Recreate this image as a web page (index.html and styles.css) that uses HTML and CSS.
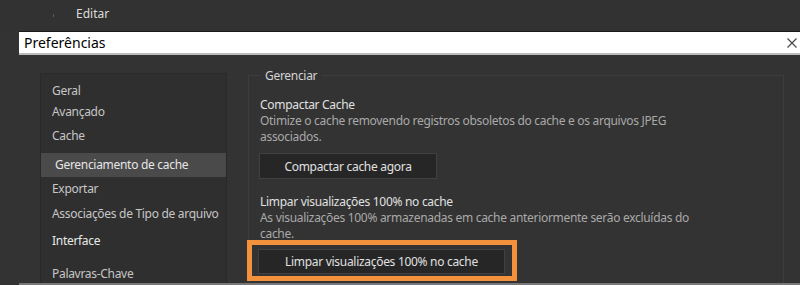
FILE: index.html
```html
<!DOCTYPE html>
<html lang="pt">
<head>
<meta charset="utf-8">
<link rel="stylesheet" href="styles.css">
</head>
<body>
<div class="topbar">
  <span class="dot"></span>
  <span class="menu-item">Editar</span>
</div>
<div class="window">
  <div class="titlebar">
    <span class="title">Preferências</span>
    <svg class="close" width="10" height="10" viewBox="0 0 10 10"><path d="M0.5 0.5 L9.5 9.5 M9.5 0.5 L0.5 9.5" stroke="#4a4a4a" stroke-width="1.2" fill="none"/></svg>
  </div>
  <div class="body">
    <div class="sidebar">
      <div class="item">Geral</div>
      <div class="item g1">Avançado</div>
      <div class="item g4">Cache</div>
      <div class="item selected">Gerenciamento de cache</div>
      <div class="item g2">Exportar</div>
      <div class="item g5">Associações de Tipo de arquivo</div>
      <div class="item g7 bright">Interface</div>
      <div class="item g13">Palavras-Chave</div>
    </div>
    <fieldset class="group">
      <legend class="legend">Gerenciar</legend>
      <div class="section">
        <div class="sec-title">Compactar Cache</div>
        <div class="sec-desc">Otimize o cache removendo registros obsoletos do cache e os arquivos JPEG associados.</div>
        <button class="btn btn-compact">Compactar cache agora</button>
      </div>
      <div class="section s2">
        <div class="sec-title">Limpar visualizações 100% no cache</div>
        <div class="sec-desc">As visualizações 100% armazenadas em cache anteriormente serão excluídas do cache.</div>
        <div class="highlight">
          <button class="btn btn-clear">Limpar visualizações 100% no cache</button>
          <span class="hl-box"></span>
        </div>
      </div>
    </fieldset>
  </div>
</div>
</body>
</html>
```
FILE: styles.css
```css
html, body {
  margin: 0;
  padding: 0;
}
body {
  width: 800px;
  height: 285px;
  overflow: hidden;
  background: #333333;
  font-family: "Noto Sans", "Open Sans", sans-serif;
  font-size: 12px;
  letter-spacing: -0.3px;
  color: #d0d0d0;
}
.topbar {
  height: 31px;
  display: flex;
  align-items: center;
  background: #323232;
}
.dot {
  width: 1px;
  height: 3px;
  background: #5a5a5a;
  margin-left: 53px;
  margin-right: 22px;
}
.menu-item {
  color: #dcdcdc;
  font-size: 12px;
  letter-spacing: 0;
  position: relative;
  top: -2px;
}
.window {
  margin-left: 19px;
}
.titlebar {
  height: 21px;
  background: #ffffff;
  border-top: 1px solid #1a1a1a;
  border-bottom: 2px solid #bcbcbc;
  display: flex;
  align-items: center;
  justify-content: space-between;
  padding: 0 3px 0 5px;
}
.title {
  color: #000;
  font-size: 14px;
  letter-spacing: 0;
}
.close {
  margin-top: 1px;
}
.body {
  height: 210px;
  border-bottom: 2px solid #777777;
  display: flex;
  align-items: flex-start;
  padding-top: 18px;
  padding-left: 21px;
  overflow: hidden;
}
.sidebar {
  width: 187px;
  height: 240px;
  background: #2f2f2f;
  border: 1px solid #292929;
  padding-top: 7px;
  box-sizing: border-box;
  flex: none;
}
.item {
  height: 20px;
  line-height: 20px;
  padding-left: 11px;
  color: #c6c6c6;
  white-space: nowrap;
}
.g1 { margin-top: 1px; }
.g2 { margin-top: 2px; }
.g4 { margin-top: 4px; }
.g5 { margin-top: 5px; }
.g7 { margin-top: 7px; }
.g13 { margin-top: 13px; }
.selected {
  margin-top: 7px;
  height: 24px;
  line-height: 24px;
  background: #4a4a4a;
  color: #e6e6e6;
  padding-left: 14px;
}
.bright {
  color: #e8e8e8;
}
.group {
  margin: -5px 0 0 21px;
  width: 536px;
  height: 250px;
  box-sizing: border-box;
  border: 1px solid #3d3d3d;
  padding: 14px 0 0 11px;
  flex: none;
}
.legend {
  color: #d4d4d4;
  padding: 0 5px;
  margin-left: 0;
  line-height: 14px;
  position: relative;
  top: 1px;
}
.section {
  display: flex;
  flex-direction: column;
  align-items: flex-start;
}
.sec-title {
  color: #e0e0e0;
  line-height: 17px;
}
.sec-desc {
  color: #a9a9a9;
  line-height: 16px;
  width: 460px;
}
.btn {
  font-family: "Noto Sans", "Open Sans", sans-serif;
  font-size: 12px;
  letter-spacing: -0.3px;
  color: #e0e0e0;
  background: #262626;
  border: 1px solid #404040;
  border-radius: 0;
  height: 26px;
  padding: 0;
  margin: 0;
}
.btn-compact {
  width: 178px;
  margin-top: 8px;
  margin-left: -1px;
}
.s2 {
  margin-top: 14px;
}
.highlight {
  position: relative;
  margin-top: 7px;
  margin-left: -2px;
  display: flex;
}
.btn-clear {
  width: 247px;
  height: 25px;
}
.hl-box {
  position: absolute;
  left: -11px;
  right: -12px;
  top: -9px;
  bottom: -7px;
  border: 5px solid #f4913d;
  pointer-events: none;
}
```
